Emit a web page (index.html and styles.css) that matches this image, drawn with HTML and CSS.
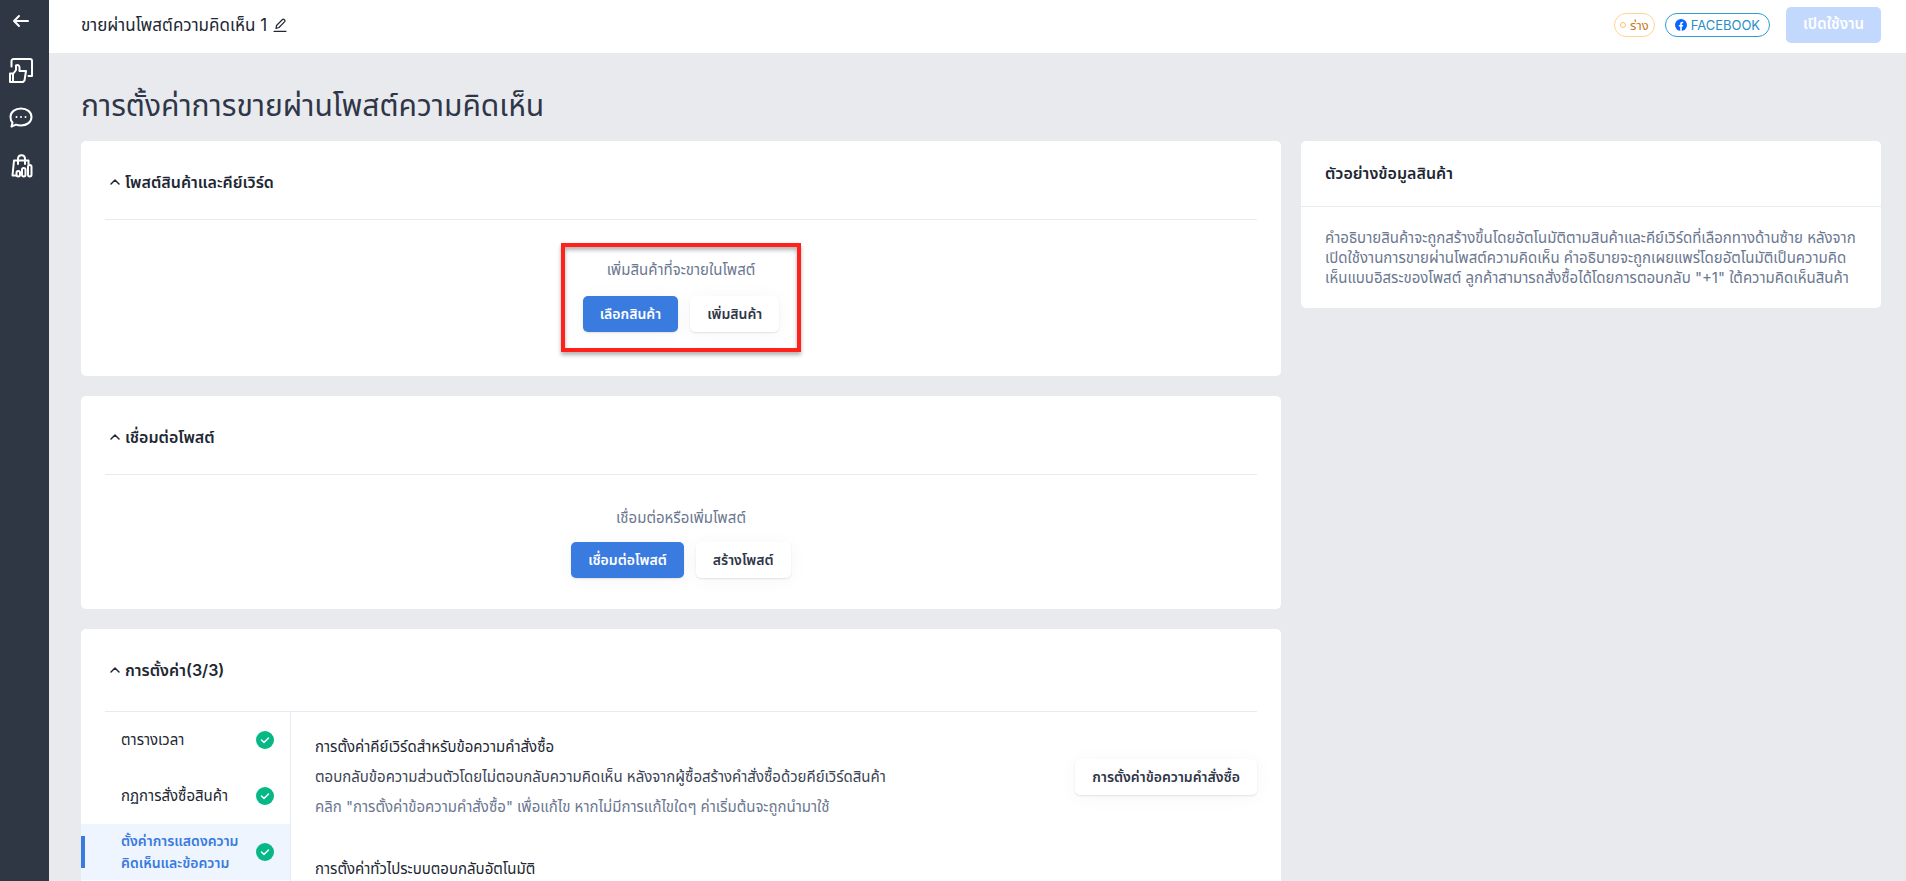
FILE: index.html
```html
<!DOCTYPE html>
<html lang="th">
<head>
  <meta charset="UTF-8" />
  <meta name="viewport" content="width=device-width, initial-scale=1.0" />
  <title>การตั้งค่าการขายผ่านโพสต์ความคิดเห็น</title>
  <link rel="stylesheet" href="styles.css">
</head>
<body>
  <nav class="sidebar">
    <a href="#" aria-label="ย้อนกลับ">
      <svg width="24" height="24" viewBox="0 0 24 24"><path d="M20 12H6M11 7l-5 5 5 5"/></svg>
    </a>
    <a href="#" aria-label="โพสต์">
      <svg width="26" height="26" viewBox="0 0 26 26"><path d="M3.500 9.500V4a2 2 0 0 1 2-2H22a2 2 0 0 1 2 2v15h-3.500"/><path d="M2 16.500h3V25H2zM5 17l3-4V8.500c2-1 3.500 0 3.500 2V14h6.500l-1.500 9.500L15 25H5"/></svg>
    </a>
    <a href="#" aria-label="ข้อความ">
      <svg width="26" height="26" viewBox="0 0 26 26"><path d="M13 3.500c6 0 10.500 3.500 10.500 8.500s-4.500 8.500-10.500 8.500c-2 0-3.500-.2-5-.9L3.500 21.500l1-4C3 16 2.500 14 2.500 12c0-5 4.500-8.500 10.500-8.500z"/><path class="dots" d="M8.500 12h0M13 12h0M17.500 12h0"/></svg>
    </a>
    <a href="#" aria-label="สินค้า">
      <svg width="26" height="26" viewBox="0 0 26 26"><path d="M8 22.500H4.500L6 7.500h14.500V11M10 11V6c0-5 7-5 7 0v5"/><rect x="8.500" y="18" width="3.500" height="5.500" rx="1.700"/><rect x="14" y="15" width="3.500" height="8.500" rx="1.700"/><rect x="20" y="12" width="3.500" height="11.500" rx="1.700"/></svg>
    </a>
  </nav>

  <div class="page">
    <header class="topbar">
      <span class="name">ขายผ่านโพสต์ความคิดเห็น 1</span>
      <button class="edit" aria-label="แก้ไข">
        <svg width="14" height="14" viewBox="0 0 14 14"><path d="M1 13.300h12M3 10.500l.5-3L9.500 1.500c1-1 3.200 1 2.200 2.200L6 9.500z"/></svg>
      </button>
      <span class="badge draft"><i></i>ร่าง</span>
      <span class="badge facebook">
        <svg width="12" height="12" viewBox="0 0 12 12"><circle cx="6" cy="6" r="6" fill="#0866ff"/><path d="M5.200 12V7.600H3.900V6h1.300V4.900c0-1.700.9-2.500 3-2.200v1.500c-1.100-.1-1.400.1-1.400.9V6h1.400l-.3 1.600H6.800V12z" fill="#fff"/></svg>
        FACEBOOK
      </span>
      <button class="btn primary" disabled>เปิดใช้งาน</button>
    </header>

    <main>
      <h1>การตั้งค่าการขายผ่านโพสต์ความคิดเห็น</h1>
      <div class="columns">
        <div class="left">
          <section class="card">
            <h2><svg width="10" height="6" viewBox="0 0 10 6"><path d="M1 5l4-4 4 4"/></svg>โพสต์สินค้าและคีย์เวิร์ด</h2>
            <div class="empty products">
              <div class="highlight">
                <p>เพิ่มสินค้าที่จะขายในโพสต์</p>
                <div class="actions">
                  <button class="btn primary">เลือกสินค้า</button>
                  <button class="btn">เพิ่มสินค้า</button>
                </div>
              </div>
            </div>
          </section>

          <section class="card">
            <h2><svg width="10" height="6" viewBox="0 0 10 6"><path d="M1 5l4-4 4 4"/></svg>เชื่อมต่อโพสต์</h2>
            <div class="empty posts">
              <p>เชื่อมต่อหรือเพิ่มโพสต์</p>
              <div class="actions">
                <button class="btn primary">เชื่อมต่อโพสต์</button>
                <button class="btn">สร้างโพสต์</button>
              </div>
            </div>
          </section>

          <section class="card">
            <h2 class="tall"><svg width="10" height="6" viewBox="0 0 10 6"><path d="M1 5l4-4 4 4"/></svg>การตั้งค่า(3/3)</h2>
            <div class="settings">
              <div class="tabs">
                <a href="#">ตารางเวลา <svg width="18" height="18" viewBox="0 0 18 18"><circle cx="9" cy="9" r="9"/><path d="M5.500 9l2.500 2.500L12.500 7"/></svg></a>
                <a href="#">กฏการสั่งซื้อสินค้า <svg width="18" height="18" viewBox="0 0 18 18"><circle cx="9" cy="9" r="9"/><path d="M5.500 9l2.500 2.500L12.500 7"/></svg></a>
                <a href="#" class="active"><span>ตั้งค่าการแสดงความ<br>คิดเห็นและข้อความ</span> <svg width="18" height="18" viewBox="0 0 18 18"><circle cx="9" cy="9" r="9"/><path d="M5.500 9l2.500 2.500L12.500 7"/></svg></a>
              </div>
              <div class="options">
                <div class="option">
                  <div>
                    <h3>การตั้งค่าคีย์เวิร์ดสำหรับข้อความคำสั่งซื้อ</h3>
                    <p>ตอบกลับข้อความส่วนตัวโดยไม่ตอบกลับความคิดเห็น หลังจากผู้ซื้อสร้างคำสั่งซื้อด้วยคีย์เวิร์ดสินค้า</p>
                    <p class="hint">คลิก "การตั้งค่าข้อความคำสั่งซื้อ" เพื่อแก้ไข หากไม่มีการแก้ไขใดๆ ค่าเริ่มต้นจะถูกนำมาใช้</p>
                  </div>
                  <button class="btn">การตั้งค่าข้อความคำสั่งซื้อ</button>
                </div>
                <div class="option">
                  <h3>การตั้งค่าทั่วไประบบตอบกลับอัตโนมัติ</h3>
                </div>
              </div>
            </div>
          </section>
        </div>

        <aside class="preview">
          <h2>ตัวอย่างข้อมูลสินค้า</h2>
          <p>คำอธิบายสินค้าจะถูกสร้างขึ้นโดยอัตโนมัติตามสินค้าและคีย์เวิร์ดที่เลือกทางด้านซ้าย หลังจากเปิดใช้งานการขายผ่านโพสต์ความคิดเห็น คำอธิบายจะถูกเผยแพร่โดยอัตโนมัติเป็นความคิดเห็นแบบอิสระของโพสต์ ลูกค้าสามารถสั่งซื้อได้โดยการตอบกลับ "+1" ใต้ความคิดเห็นสินค้า</p>
        </aside>
      </div>
    </main>
  </div>
</body>
</html>
```
FILE: styles.css
```css
:root {
  --bg: #e8eaed;
  --dark: #2f3644;
  --text: #212733;
  --muted: #6b7790;
  --line: #e8ebf2;
  --blue: #3a7be0;
}

* {
  box-sizing: border-box;
}

body {
  margin: 0;
  display: flex;
  height: 100vh;
  overflow: hidden;
  font-family: Inter, "Noto Sans Thai", "Noto Sans", sans-serif;
  font-size: 15px;
  line-height: 20px;
  color: var(--text);
  background: var(--bg);
}

h1, h2, h3, p {
  margin: 0;
  font-weight: 400;
}

svg {
  flex: none;
  fill: none;
  stroke-linecap: round;
  stroke-linejoin: round;
}

.sidebar {
  flex: none;
  width: 49px;
  padding: 9px 8px 0 8px;
  display: flex;
  flex-direction: column;
  gap: 22px;
  background: var(--dark);
}

.sidebar a {
  height: 26px;
}

.sidebar svg {
  stroke: #fff;
  stroke-width: 2;
}

.page {
  flex: 1;
  min-width: 0;
}

.topbar {
  height: 53px;
  padding: 0 25px 4px 32px;
  display: flex;
  align-items: center;
  background: #fff;
}

.name {
  font-size: 17px;
}

.edit {
  display: flex;
  padding: 0;
  margin: 0 auto 0 6px;
  border: none;
  background: none;
}

.edit svg {
  stroke: var(--text);
  stroke-width: 1.2;
}

.badge {
  height: 24px;
  display: flex;
  align-items: center;
  gap: 4px;
  padding: 0 5px;
  margin-right: 10px;
  border: 1px solid #ffd591;
  border-radius: 12px;
  font-size: 13px;
  color: #c97a1e;
}

.draft i {
  width: 6px;
  height: 6px;
  border: 1px solid #fbc56d;
  border-radius: 50%;
}

.facebook {
  padding: 0 9px;
  margin-right: 16px;
  border-color: #2a9fd8;
  color: #2a8fc8;
}

.btn {
  flex: none;
  height: 36px;
  padding: 0 17px;
  border: none;
  border-radius: 5px;
  font: 600 14px Inter, "Noto Sans Thai", "Noto Sans", sans-serif;
  color: #2f3648;
  background: #fff;
  box-shadow: 0 1px 2px rgba(0, 0, 0, 0.1), 0 2px 20px rgba(0, 0, 0, 0.04);
}

.btn.primary {
  color: #fff;
  background: var(--blue);
}

.btn:disabled {
  font-size: 15px;
  background: #c2d8fc;
  box-shadow: none;
}

main {
  padding: 32px 25px 0 32px;
}

h1 {
  font-size: 30px;
  line-height: 40px;
  margin-bottom: 16px;
  color: #2f3648;
}

.columns {
  display: grid;
  grid-template-columns: 60fr 29fr;
  gap: 20px;
  align-items: start;
}

.left {
  display: grid;
  gap: 20px;
}

.card,
.preview {
  border-radius: 5px;
  background: #fff;
}

.card {
  padding: 0 24px;
}

h2 {
  font-size: 16px;
  font-weight: 600;
}

.card h2 {
  height: 79px;
  padding: 4px 5px 0;
  display: flex;
  align-items: center;
  gap: 5px;
  border-bottom: 1px solid var(--line);
}

.card h2.tall {
  height: 83px;
  padding-top: 0;
}

.card h2 svg {
  stroke: var(--text);
  stroke-width: 1.5;
}

.empty {
  display: flex;
  flex-direction: column;
  align-items: center;
  color: var(--muted);
}

.products {
  padding: 23px 0 24px;
}

.highlight {
  width: 240px;
  padding: 13px 0 16px;
  border: 4px solid #ff211c;
  box-shadow: 0 3px 4px rgba(0, 0, 0, 0.3), inset 0 3px 4px rgba(0, 0, 0, 0.3);
  text-align: center;
}

.posts {
  padding: 33px 0 31px;
}

.actions {
  display: flex;
  justify-content: center;
  gap: 12px;
  margin-top: 16px;
}

.posts .actions {
  margin-top: 14px;
}

.settings {
  display: flex;
}

.tabs {
  flex: none;
  width: 210px;
  margin-left: -24px;
  border-right: 1px solid var(--line);
}

.tabs a {
  position: relative;
  height: 56px;
  padding: 0 16px 0 40px;
  display: flex;
  align-items: center;
  justify-content: space-between;
  color: var(--text);
  text-decoration: none;
}

.tabs a.active {
  font-size: 14px;
  line-height: 22px;
  font-weight: 600;
  color: var(--blue);
  background: #eef5fe;
}

.tabs a.active::before {
  content: "";
  position: absolute;
  left: 0;
  top: 12px;
  width: 4px;
  height: 32px;
  background: var(--blue);
}

.tabs circle {
  fill: #05b885;
}

.tabs path {
  stroke: #fff;
  stroke-width: 1.5;
}

.options {
  flex: 1;
  min-width: 0;
  padding: 25px 0 0 24px;
}

.option {
  display: flex;
  align-items: center;
  justify-content: space-between;
  margin-bottom: 42px;
}

.option h3 {
  font-size: 15px;
}

.option p {
  margin-top: 10px;
  color: #3c4354;
}

.option .hint {
  color: var(--muted);
}

.preview h2 {
  padding: 22px 24px 23px;
  border-bottom: 1px solid var(--line);
}

.preview p {
  padding: 21px 24px 20px;
  color: var(--muted);
}
```
